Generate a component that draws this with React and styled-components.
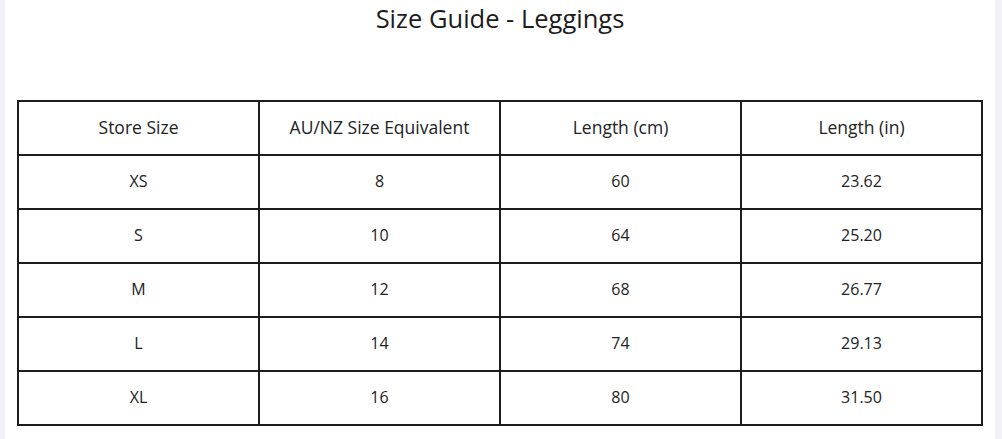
import React from "react";
import styled, { createGlobalStyle } from "styled-components";

const Global = createGlobalStyle`
  html, body { margin: 0; padding: 0; background: #f3f2f8; }
  body { font-family: "Open Sans", Roboto, Arial, sans-serif; color: #202020; }
`;

const Panel = styled.div`
  margin: 0 7px 0 5px;
  height: 439px;
  background: #ffffff;
  padding: 0 12px;
  box-sizing: border-box;
`;

const Title = styled.h1`
  margin: 0;
  height: 100px;
  padding-top: 2px;
  box-sizing: border-box;
  text-align: center;
  font-size: 25.5px;
  line-height: 32px;
  font-weight: 400;
  letter-spacing: 0;
  color: #1c1c1c;
`;

const Table = styled.table`
  width: 966px;
  border-collapse: collapse;
  table-layout: fixed;
`;

const Cell = styled.td`
  border: 2px solid #1d1d1d;
  height: ${(p) => (p.$head ? "50px" : "49px")};
  padding: 0 0 ${(p) => (p.$head ? "2px" : "3px")};
  text-align: center;
  vertical-align: middle;
  line-height: 20px;
  font-size: ${(p) => (p.$head ? "17.5px" : "16px")};
  color: #222;
`;

const head = ["Store Size", "AU/NZ Size Equivalent", "Length (cm)", "Length (in)"];
const rows = [
  ["XS", "8", "60", "23.62"],
  ["S", "10", "64", "25.20"],
  ["M", "12", "68", "26.77"],
  ["L", "14", "74", "29.13"],
  ["XL", "16", "80", "31.50"],
];

export default function App() {
  return (
    <>
      <Global />
      <Panel>
        <Title>Size Guide - Leggings</Title>
        <Table>
          <tbody>
            <tr>
              {head.map((h) => (
                <Cell key={h} $head>{h}</Cell>
              ))}
            </tr>
            {rows.map((r) => (
              <tr key={r[0]}>
                {r.map((c, i) => (
                  <Cell key={i}>{c}</Cell>
                ))}
              </tr>
            ))}
          </tbody>
        </Table>
      </Panel>
    </>
  );
}
